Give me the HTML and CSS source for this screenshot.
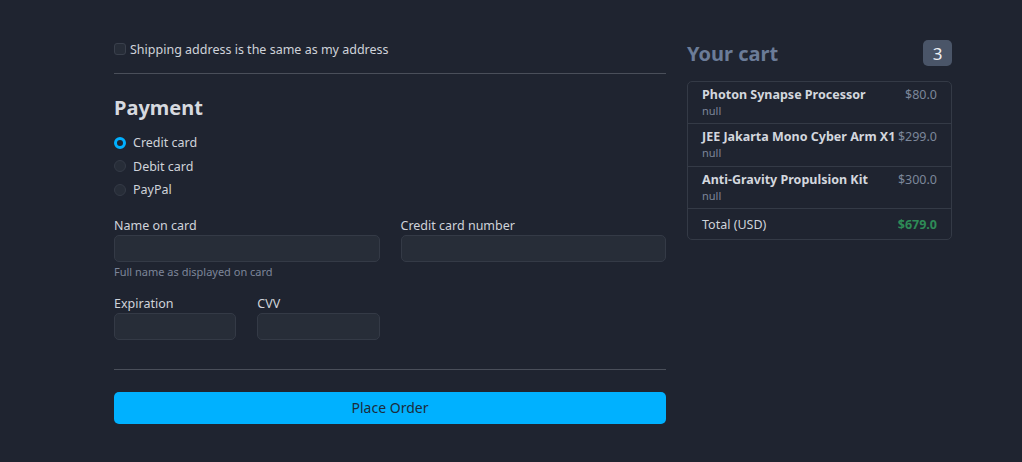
FILE: index.html
```html
<!DOCTYPE html>
<html>
<head>
<meta charset="utf-8">
<link rel="stylesheet" href="styles.css">
</head>
<body>
<div class="page">
  <div class="main">
    <label class="check">
      <span class="box"></span>
      <span>Shipping address is the same as my address</span>
    </label>
    <hr class="sep first">
    <h4 class="title">Payment</h4>
    <div class="radios">
      <label class="radio"><span class="dot on"></span>Credit card</label>
      <label class="radio"><span class="dot"></span>Debit card</label>
      <label class="radio"><span class="dot"></span>PayPal</label>
    </div>
    <div class="fields">
      <div class="field span2">
        <label class="lbl">Name on card</label>
        <div class="input"></div>
        <small class="help">Full name as displayed on card</small>
      </div>
      <div class="field span2">
        <label class="lbl">Credit card number</label>
        <div class="input"></div>
      </div>
      <div class="field">
        <label class="lbl">Expiration</label>
        <div class="input"></div>
      </div>
      <div class="field">
        <label class="lbl">CVV</label>
        <div class="input"></div>
      </div>
    </div>
    <hr class="sep second">
    <button class="order">Place Order</button>
  </div>
  <aside class="cart">
    <div class="cart-head">
      <span class="cart-title">Your cart</span>
      <span class="badge">3</span>
    </div>
    <ul class="list">
      <li class="item i1">
        <div><div class="name">Photon Synapse Processor</div><div class="sub">null</div></div>
        <span class="price">$80.0</span>
      </li>
      <li class="item i2">
        <div><div class="name">JEE Jakarta Mono Cyber Arm X1</div><div class="sub">null</div></div>
        <span class="price">$299.0</span>
      </li>
      <li class="item i3">
        <div><div class="name">Anti-Gravity Propulsion Kit</div><div class="sub">null</div></div>
        <span class="price">$300.0</span>
      </li>
      <li class="item total">
        <span>Total (USD)</span>
        <strong class="sum">$679.0</strong>
      </li>
    </ul>
  </aside>
</div>
</body>
</html>
```
FILE: styles.css
```css
* { box-sizing: border-box; }
html, body { margin: 0; padding: 0; }
body {
  background: #1f2430;
  color: #cbccc6;
  font-family: "Noto Sans", "Open Sans", sans-serif;
  font-size: 12.5px;
  height: 462px;
  overflow: hidden;
}
.page {
  display: flex;
  gap: 21px;
  padding: 40px 0 0 114px;
}
.main { width: 552px; }
.check {
  display: flex;
  align-items: center;
  gap: 4px;
  height: 18px;
  color: #cfd3da;
}
.box {
  width: 12px; height: 12px;
  border: 1px solid #3a404c;
  background: #272d38;
  border-radius: 3px;
}
.sep {
  border: 0;
  border-top: 1px solid #4a4f5a;
  margin: 0;
}
.sep.first { margin-top: 15px; }
.title {
  margin: 20px 0 0;
  font-size: 20px;
  font-weight: 700;
  line-height: 28px;
  color: #d6d9df;
}
.radios {
  margin-top: 9px;
  display: flex;
  flex-direction: column;
}
.radio {
  display: flex;
  align-items: center;
  gap: 7px;
  height: 23.5px;
  color: #cfd3da;
}
.dot {
  width: 12px; height: 12px;
  border-radius: 50%;
  background: #272d38;
  border: 1px solid #343a46;
}
.dot.on {
  background: #1f2430;
  border: 3.5px solid #00b0ff;
}
.fields {
  margin-top: 15px;
  display: grid;
  grid-template-columns: repeat(4, 1fr);
  column-gap: 21px;
  row-gap: 16px;
}
.span2 { grid-column: span 2; }
.field { display: flex; flex-direction: column; }
.lbl {
  line-height: 18px;
  margin-bottom: 0;
  color: #cfd3da;
}
.input {
  height: 27px;
  background: #272d38;
  border: 1px solid #343a46;
  border-radius: 5px;
}
.help {
  font-size: 11px;
  line-height: 15px;
  margin-top: 2px;
  color: #7d8699;
}
.sep.second { margin-top: 29px; }
.order {
  display: block;
  width: 100%;
  margin-top: 22px;
  height: 32px;
  border: 0;
  border-radius: 5px;
  background: #00b1ff;
  color: #1c2c3c;
  font-family: inherit;
  font-size: 14px;
}
.cart { width: 265px; }
.cart-head {
  display: flex;
  justify-content: space-between;
  align-items: center;
  height: 26px;
}
.cart-title {
  font-size: 20px;
  font-weight: 700;
  color: #6b7c98;
}
.badge {
  width: 29px; height: 26px;
  border-radius: 5px;
  background: #4a5568;
  color: #eef0f3;
  font-size: 17px;
  display: flex;
  align-items: center;
  justify-content: center;
}
.list {
  list-style: none;
  margin: 15px 0 0;
  padding: 0;
  border: 1px solid #343a46;
  border-radius: 5px;
}
.item {
  display: flex;
  justify-content: space-between;
  padding: 4px 14px 0 14px;
  border-top: 1px solid #343a46;
  white-space: nowrap;
}
.item.i1 { border-top: 0; height: 41px; }
.item.i2 { height: 43px; }
.item.i3 { height: 42px; }
.name {
  font-weight: 700;
  color: #d3d7de;
  line-height: 18px;
}
.sub {
  font-size: 11px;
  line-height: 14px;
  color: #7d8699;
}
.price {
  color: #7c879a;
  line-height: 18px;
}
.item.total {
  height: 31px;
  align-items: center;
  padding-top: 0;
  color: #cfd3da;
}
.sum { color: #2e8b57; font-weight: 700; }
```
